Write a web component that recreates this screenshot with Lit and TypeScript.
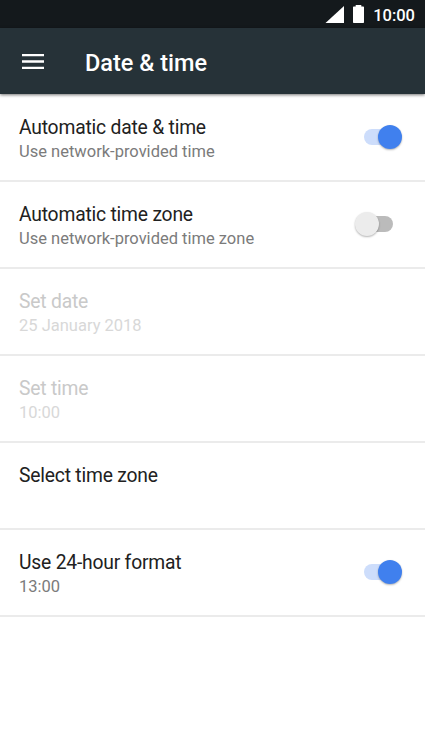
import { LitElement, html, css } from "lit";
import { customElement, property } from "lit/decorators.js";
import { classMap } from "lit/directives/class-map.js";

interface Setting {
  title: string;
  summary?: string;
  checked?: boolean;
  disabled?: boolean;
}

const settings: Setting[] = [
  { title: "Automatic date & time", summary: "Use network-provided time", checked: true },
  { title: "Automatic time zone", summary: "Use network-provided time zone", checked: false },
  { title: "Set date", summary: "25 January 2018", disabled: true },
  { title: "Set time", summary: "10:00", disabled: true },
  { title: "Select time zone" },
  { title: "Use 24-hour format", summary: "13:00", checked: true },
];

@customElement("toggle-switch")
class ToggleSwitch extends LitElement {
  @property({ type: Boolean }) checked = false;

  static styles = css`
    :host { display: block; flex: none; }
    .switch { display: flex; align-items: center; width: 38px; height: 24px; margin-right: 9px; }
    .switch.on { margin-right: 0; }
    .track { width: 30px; height: 16px; border-radius: 8px; background: #bbb; margin-left: 8px; flex: none; }
    .on .track { background: #cdddfb; margin-left: 0; }
    .thumb {
      width: 24px; height: 24px; border-radius: 50%; flex: none;
      background: #ececec; margin-left: -38px;
      box-shadow: 0 1px 2px rgba(0, 0, 0, 0.3);
    }
    .on .thumb { background: #4080ee; margin-left: -16px; }
  `;

  render() {
    return html`<div class=${classMap({ switch: true, on: this.checked })}>
      <div class="track"></div><div class="thumb"></div>
    </div>`;
  }
}

@customElement("app-root")
class AppRoot extends LitElement {
  static styles = css`
    :host {
      display: flex; flex-direction: column; height: 756px; overflow: hidden;
      background: #fff; font-family: Roboto, "Liberation Sans", sans-serif;
    }
    .status {
      height: 28px; flex: none; background: #14191c; color: #fff;
      display: flex; align-items: center; justify-content: flex-end;
      padding-right: 10px; box-sizing: border-box;
      font-size: 16.5px; font-weight: 500;
    }
    .signal { display: block; margin-right: 9px; }
    .battery { display: block; margin-right: 9px; }
    .clock { line-height: 26px; padding-top: 3px; }
    .bar {
      height: 66px; flex: none; background: #263238; color: #fff;
      display: flex; align-items: center; padding-left: 22px;
      box-shadow: 0 1px 3px rgba(0, 0, 0, 0.55); z-index: 1;
    }
    .menu { display: block; margin: 1px 41px 0 0; }
    .heading { margin: 4px 0 0; font-size: 23.5px; line-height: 30px; font-weight: 500; }
    .list { padding-top: 1px; }
    .row {
      height: 87px; box-sizing: border-box; padding: 21px 23px 0 19px;
      border-bottom: 2px solid #ebebeb; display: flex; justify-content: space-between;
    }
    .title { font-size: 19.3px; letter-spacing: -0.2px; line-height: 24px; color: #212121; }
    .summary { font-size: 16.5px; line-height: 24px; color: #7b7b7b; }
    .disabled .title { color: #c9c9c9; }
    .disabled .summary { color: #d8d8d8; }
    .control { margin-top: 9px; }
  `;

  render() {
    return html`
      <div class="status">
        <svg class="signal" width="19" height="17" viewBox="0 0 19 17">
          <path d="M19 0V17H0.5Z" fill="#fff" />
        </svg>
        <svg class="battery" width="11" height="18" viewBox="0 0 11 18">
          <path d="M2.7 0H8.3V1.5H10.3Q11 1.5 11 2.2V17.3Q11 18 10.3 18H0.7Q0 18 0 17.3V2.2Q0 1.5 0.7 1.5H2.7Z" fill="#fff" />
        </svg>
        <span class="clock">10:00</span>
      </div>
      <header class="bar">
        <svg class="menu" width="22" height="15" viewBox="0 0 22 15">
          <path d="M0 1.2H22M0 7.5H22M0 13.8H22" stroke="#fff" stroke-width="2.3" />
        </svg>
        <h1 class="heading">Date &amp; time</h1>
      </header>
      <main class="list">
        ${settings.map(
          (s) => html`<div class=${classMap({ row: true, disabled: !!s.disabled })}>
            <div>
              <div class="title">${s.title}</div>
              <div class="summary">${s.summary}</div>
            </div>
            ${s.checked === undefined ? null : html`<toggle-switch class="control" ?checked=${s.checked}></toggle-switch>`}
          </div>`
        )}
      </main>
    `;
  }
}
